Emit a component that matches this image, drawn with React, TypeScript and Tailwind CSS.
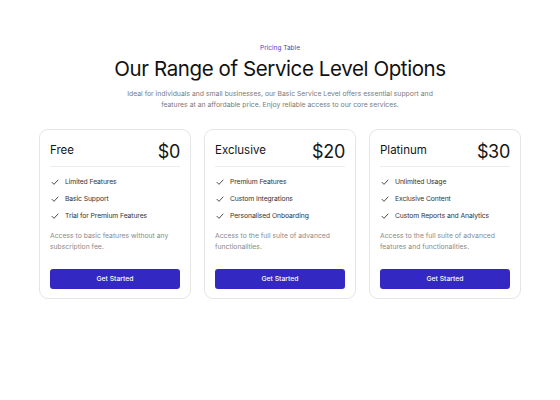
import React from "react";

const plans = [
  {
    name: "Free",
    price: "$0",
    features: ["Limited Features", "Basic Support", "Trial for Premium Features"],
    desc: "Access to basic features without any subscription fee.",
  },
  {
    name: "Exclusive",
    price: "$20",
    features: ["Premium Features", "Custom Integrations", "Personalised Onboarding"],
    desc: "Access to the full suite of advanced functionalities.",
  },
  {
    name: "Platinum",
    price: "$30",
    features: ["Unlimited Usage", "Exclusive Content", "Custom Reports and Analytics"],
    desc: "Access to the full suite of advanced features and functionalities.",
  },
];

function Check() {
  return (
    <svg width="8" height="8" viewBox="0 0 24 24" fill="none" stroke="#1f1f1f" strokeWidth="2.4" strokeLinecap="round" strokeLinejoin="round">
      <path d="M3 13l6 6L21 6" />
    </svg>
  );
}

export default function App() {
  return (
    <div className="w-[560px] h-[400px] bg-white flex flex-col items-center pt-[44px]" style={{ fontFamily: "Inter, 'Noto Sans', sans-serif" }}>
      <div className="text-[6.5px] leading-[8px] text-[#4a3fd0]">Pricing Table</div>
      <h1 className="mt-[3px] text-[20.5px] leading-[28px] text-[#111] tracking-[-0.4px] font-normal">Our Range of Service Level Options</h1>
      <p className="mt-[5px] text-[6.85px] leading-[11px] text-[#7a7a7a] text-center w-[312px]">
        Ideal for individuals and small businesses, our Basic Service Level offers essential support and features at an affordable price. Enjoy reliable access to our core services.
      </p>
      <div className="mt-[19px] flex gap-[13px]">
        {plans.map((p) => (
          <div key={p.name} className="w-[152px] h-[170px] rounded-[9px] border border-[#e6e6e6] px-[10px] pt-[10px] flex flex-col">
            <div className="flex items-center justify-between h-[22px]">
              <span className="text-[11.5px] text-[#161616]">{p.name}</span>
              <span className="text-[18px] text-[#161616] tracking-[-0.3px]">{p.price}</span>
            </div>
            <div className="mt-[4px] h-px bg-[#ececec]" />
            <div className="mt-[9px] flex flex-col gap-[5px]">
              {p.features.map((f) => (
                <div key={f} className="flex items-center gap-[6px] h-[12px] pl-[1px]">
                  <Check />
                  <span className="text-[6.8px] text-[#333] tracking-[-0.1px]">{f}</span>
                </div>
              ))}
            </div>
            <p className="mt-[8px] text-[6.8px] leading-[11px] text-[#8a8a8a] pr-[8px]">{p.desc}</p>
            <div className="flex-1" />
            <button className="mb-[9px] h-[20px] rounded-[3px] bg-[#3328c1] text-white text-[6.8px] font-medium">Get Started</button>
          </div>
        ))}
      </div>
    </div>
  );
}
